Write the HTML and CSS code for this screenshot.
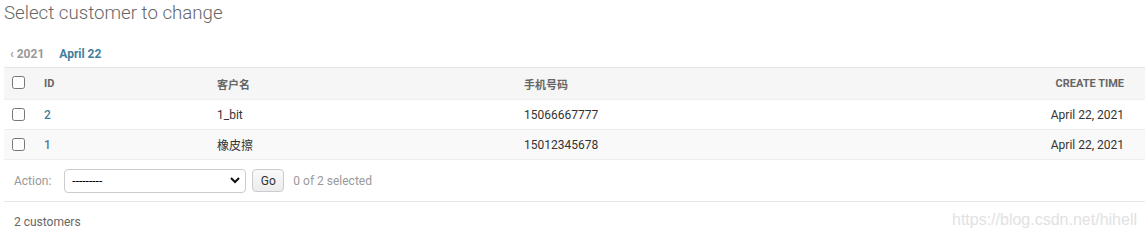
FILE: index.html
```html
<!DOCTYPE html>
<html>
<head>
<meta charset="utf-8">
<link rel="stylesheet" href="styles.css">
</head>
<body>
<div class="content">
  <h1 class="title">Select customer to change</h1>
  <div class="toplinks">
    <a class="back" href="#">‹ 2021</a>
    <span class="current">April 22</span>
  </div>
  <table class="result">
    <colgroup>
      <col class="c-check"><col class="c-id"><col class="c-name"><col class="c-phone"><col class="c-time">
    </colgroup>
    <thead>
      <tr>
        <th class="check"><input type="checkbox"></th>
        <th>ID</th>
        <th>客户名</th>
        <th>手机号码</th>
        <th class="right">CREATE TIME</th>
      </tr>
    </thead>
    <tbody>
      <tr class="row1">
        <td class="check"><input type="checkbox"></td>
        <th class="idcell"><a href="#">2</a></th>
        <td>1_bit</td>
        <td>15066667777</td>
        <td class="right">April 22, 2021</td>
      </tr>
      <tr class="row2">
        <td class="check"><input type="checkbox"></td>
        <th class="idcell"><a href="#">1</a></th>
        <td>橡皮擦</td>
        <td>15012345678</td>
        <td class="right">April 22, 2021</td>
      </tr>
    </tbody>
  </table>
  <div class="actions">
    <span class="label">Action:</span>
    <div class="select">
      <span class="select-text">---------</span>
      <svg class="chev" width="10" height="7" viewBox="0 0 10 7"><polyline points="1,1 5,5 9,1" fill="none" stroke="#111" stroke-width="2"/></svg>
    </div>
    <button class="go" type="button">Go</button>
    <span class="counter">0 of 2 selected</span>
  </div>
  <p class="paginator">2 customers</p>
  <div class="watermark">https://blog.csdn.net/hihell</div>
</div>
</body>
</html>
```
FILE: styles.css
```css
html, body {
  margin: 0;
  padding: 0;
  background: #fff;
}
body {
  font-family: Roboto, "Noto Sans CJK SC", sans-serif;
  font-size: 12px;
  color: #333;
  width: 1145px;
  height: 240px;
  overflow: hidden;
}
.content {
  position: relative;
  padding-left: 4px;
  height: 240px;
}
.title {
  margin: 0;
  padding-top: 1px;
  height: 25px;
  font-weight: 300;
  font-size: 18.7px;
  line-height: 24px;
  color: #666;
}
.toplinks {
  display: flex;
  gap: 15px;
  height: 41px;
  align-items: center;
  padding-left: 6px;
  font-size: 12px;
  font-weight: 700;
  box-sizing: border-box;
  padding-top: 15px;
}
.toplinks .back {
  color: #999;
  text-decoration: none;
}
.toplinks .current {
  color: #447e9b;
}
.result {
  width: 1141px;
  border-collapse: collapse;
  table-layout: fixed;
}
.c-check { width: 32px; }
.c-id { width: 173px; }
.c-name { width: 307px; }
.c-phone { width: 400px; }
.c-time { width: 229px; }
.result thead th {
  background: #f6f6f6;
  border-top: 1px solid #e6e6e6;
  border-bottom: 1px solid #eee;
  height: 31px;
  padding: 0 0 0 8px;
  text-align: left;
  font-size: 11px;
  font-weight: 700;
  color: #666;
  text-transform: uppercase;
  vertical-align: middle;
}
.result td, .result tbody th {
  height: 29px;
  padding: 0 0 0 8px;
  text-align: left;
  border-bottom: 1px solid #eee;
  vertical-align: middle;
  font-weight: 400;
}
.result .right {
  text-align: right;
  padding-right: 21px;
}
.row2 td, .row2 th {
  background: #f9f9f9;
}
.idcell a {
  color: #447e9b;
  text-decoration: none;
  font-weight: 500;
}
.check input {
  margin: 0;
  width: 13px;
  height: 13px;
  vertical-align: middle;
  position: relative;
  top: -1px;
}
.actions {
  display: flex;
  align-items: center;
  height: 41px;
  border-bottom: 1px solid #e6e6e6;
  padding-left: 10px;
  color: #999;
}
.actions .label {
  margin-right: 13px;
}
.select {
  width: 182px;
  height: 24px;
  box-sizing: border-box;
  border: 1px solid #ccc;
  border-radius: 4px;
  background: #fff;
  display: flex;
  align-items: center;
  justify-content: space-between;
  padding: 0 5px 0 7px;
  color: #000;
  font-size: 12px;
}
.go {
  margin-left: 6px;
  width: 32px;
  height: 23px;
  box-sizing: border-box;
  border: 1px solid #ccc;
  border-radius: 4px;
  background: linear-gradient(#fafafa, #ececec);
  font-family: Roboto, sans-serif;
  font-size: 12px;
  color: #333;
  padding: 0;
}
.counter {
  margin-left: 9px;
}
.paginator {
  margin: 0;
  padding: 12px 0 0 10px;
  line-height: 16px;
  color: #666;
}
.watermark {
  position: absolute;
  right: 8px;
  top: 211px;
  font-family: "Liberation Sans", Arial, sans-serif;
  font-size: 16px;
  color: #e2e2e2;
}
```
